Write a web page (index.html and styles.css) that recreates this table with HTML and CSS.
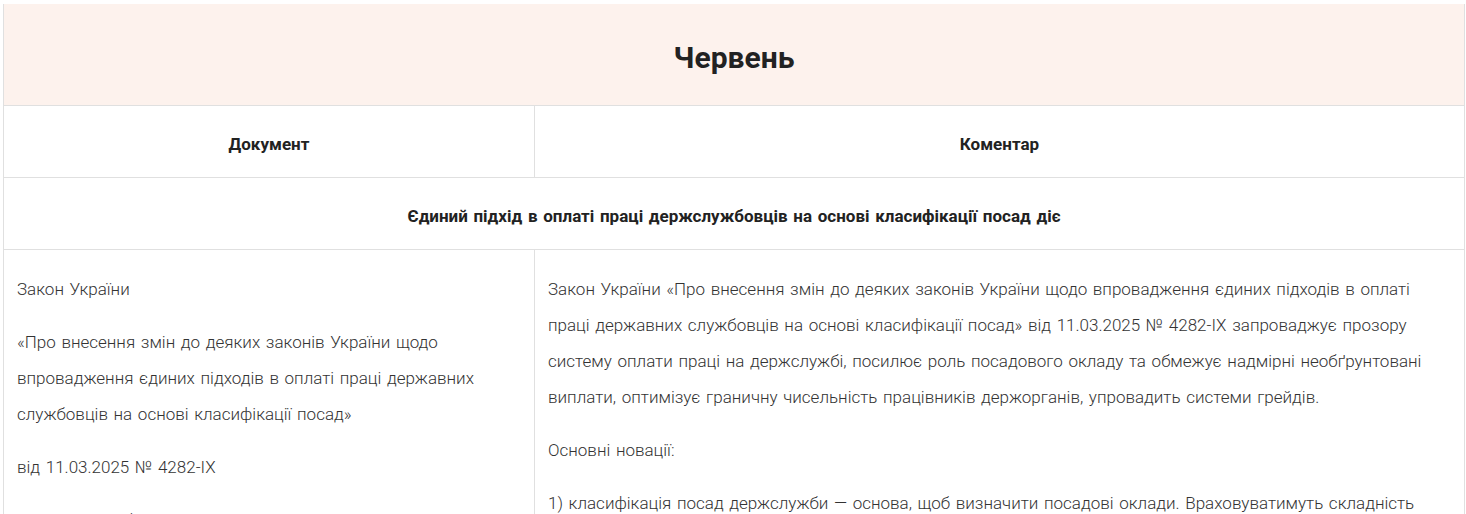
FILE: index.html
```html
<!DOCTYPE html>
<html lang="uk">
<head>
<meta charset="utf-8">
<title>Червень</title>
<link rel="stylesheet" href="styles.css">
</head>
<body>
<div class="page">
  <table class="calendar">
    <colgroup>
      <col class="col-doc">
      <col class="col-comment">
    </colgroup>
    <thead>
      <tr class="month-row">
        <th colspan="2" class="month">Червень</th>
      </tr>
      <tr class="head-row">
        <th class="head">Документ</th>
        <th class="head">Коментар</th>
      </tr>
    </thead>
    <tbody>
      <tr class="section-row">
        <td colspan="2" class="section">Єдиний підхід в оплаті праці держслужбовців на основі класифікації посад діє</td>
      </tr>
      <tr class="entry-row">
        <td class="cell">
          <p>Закон України</p>
          <p>«Про внесення змін до деяких законів України щодо впровадження єдиних підходів в оплаті праці державних службовців на основі класифікації посад»</p>
          <p>від 11.03.2025 № 4282-IX</p>
          <p>норми, що набирають чинності</p>
        </td>
        <td class="cell">
          <p>Закон України «Про внесення змін до деяких законів України щодо впровадження єдиних підходів в оплаті праці державних службовців на основі класифікації посад» від 11.03.2025 № 4282-IX запроваджує прозору систему оплати праці на держслужбі, посилює роль посадового окладу та обмежує надмірні необґрунтовані виплати, оптимізує граничну чисельність працівників держорганів, упровадить системи грейдів.</p>
          <p>Основні новації:</p>
          <p>1) класифікація посад держслужби — основа, щоб визначити посадові оклади. Враховуватимуть складність роботи, відповідальність, рівень повноважень та умови праці.</p>
        </td>
      </tr>
    </tbody>
  </table>
</div>
</body>
</html>
```
FILE: styles.css
```css
html, body {
  margin: 0;
  padding: 0;
  background: #ffffff;
}

.page {
  padding: 4px 1px 0 3px;
  font-family: Roboto, "Noto Sans", Arial, sans-serif;
  color: #333333;
}

.calendar {
  width: 1462px;
  border-collapse: collapse;
  table-layout: fixed;
}

.col-doc {
  width: 531px;
}

.calendar th,
.calendar td {
  border: 1px solid #e0e0e0;
}

.month-row .month {
  border-top: none;
  background: #fdf2ed;
  height: 95px;
  padding: 6px 0 0;
  font-size: 30px;
  font-weight: 700;
  color: #222222;
  text-align: center;
  vertical-align: middle;
}

.head,
.section {
  height: 67px;
  padding: 4px 14px 0;
  font-size: 17px;
  font-weight: 700;
  word-spacing: 1.5px;
  color: #222222;
  text-align: center;
  vertical-align: middle;
}

.cell {
  padding: 21px 14px 0 13px;
  vertical-align: top;
  font-size: 17px;
  font-weight: 300;
  word-spacing: 1.5px;
  line-height: 36px;
  color: #333333;
}

.cell p {
  margin: 0 0 17px;
}
```
